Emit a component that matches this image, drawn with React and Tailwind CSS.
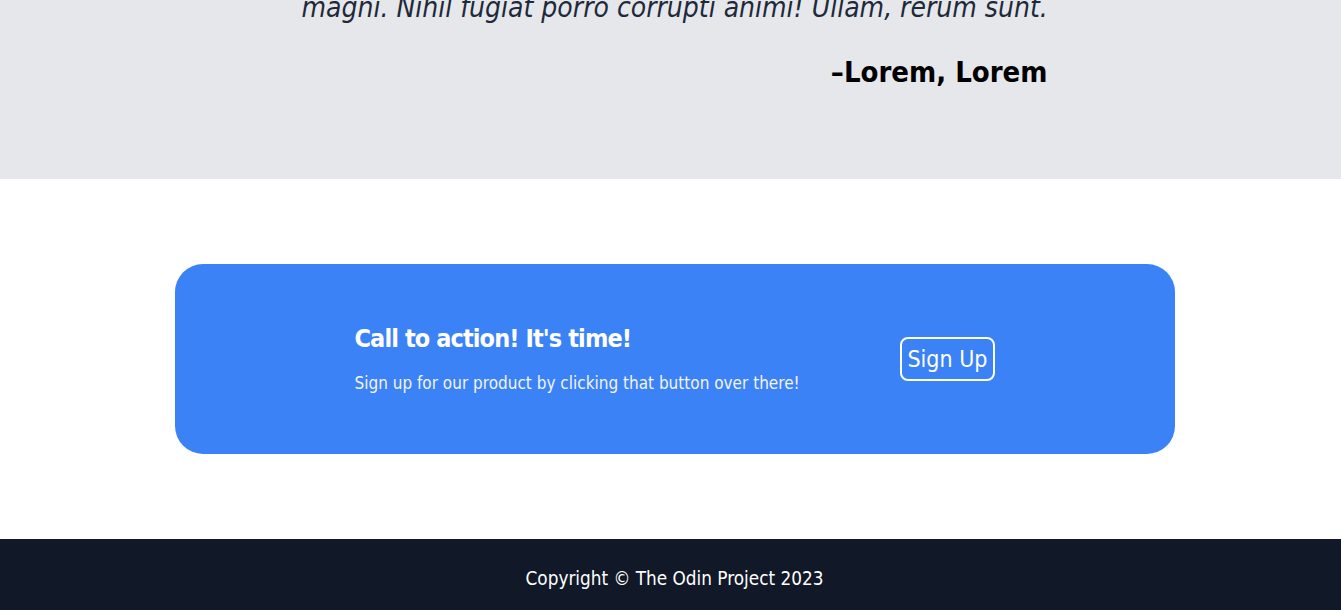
export default function App() {
  const font = { fontFamily: '"Liberation Sans Narrow", "DejaVu Sans Condensed", Roboto, sans-serif' };

  return (
    <div className="min-h-[610px] flex flex-col bg-white" style={font}>
      <section className="bg-[#e5e7eb] h-[179px] overflow-hidden pl-[8px]">
        <div className="w-[746px] mx-auto flex flex-col">
          <p className="-mt-[9px] text-[28px] leading-[34px] italic text-gray-800 whitespace-nowrap">
            magni. Nihil fugiat porro corrupti animi! Ullam, rerum sunt.
          </p>
          <p className="mt-[28px] text-right text-[29px] leading-[38px] font-bold text-black">
            –Lorem, Lorem
          </p>
        </div>
      </section>

      <section className="py-[85px] pl-[8px]">
        <div className="w-[1000px] mx-auto bg-[#3b82f6] rounded-[28px] h-[190px] px-[180px] flex items-center justify-between">
          <div className="flex flex-col gap-[18px] text-white">
            <h2 className="text-[25px] leading-[30px] font-bold tracking-[-0.9px]">Call to action! It's time!</h2>
            <p className="text-[17px] leading-[22px] text-gray-100">
              Sign up for our product by clicking that button over there!
            </p>
          </div>
          <button className="border-2 border-white rounded-lg text-white text-[23px] leading-[32px] px-[5px] py-[4px]">
            Sign Up
          </button>
        </div>
      </section>

      <footer className="bg-[#111827] h-[71px] flex items-center justify-center pl-[8px]">
        <p className="text-white text-[18.8px] leading-[24px] pt-[8px]">Copyright © The Odin Project 2023</p>
      </footer>
    </div>
  );
}
